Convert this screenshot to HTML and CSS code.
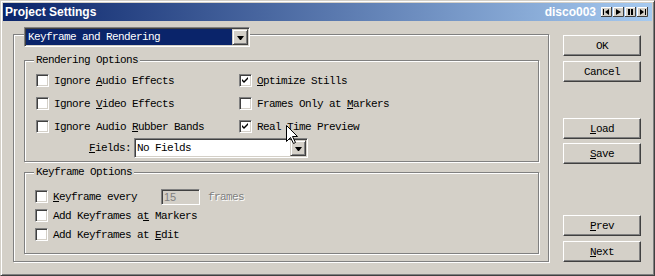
FILE: index.html
```html
<!DOCTYPE html>
<html lang="en">
<head>
    <meta charset="UTF-8">
    <title>Project Settings</title>
    <link rel="stylesheet" href="styles.css">
</head>
<body>
    <div class="window">
        <div class="titlebar">
            <span class="title">Project Settings</span>
            <span class="clip-name">disco003</span>
            <div class="transport">
                <svg class="tbtn" width="11" height="10" viewBox="0 0 11 10">
                    <rect width="11" height="10" fill="#d4d0c8"/>
                    <path d="M0.5 9V0.5H10" stroke="#fff" fill="none"/>
                    <path d="M0 9.5H10.5V0" stroke="#404040" fill="none"/>
                    <rect x="2" y="2" width="1" height="6" fill="#000"/>
                    <polygon points="8,2 8,8 4,5" fill="#000"/>
                </svg>
                <svg class="tbtn" width="11" height="10" viewBox="0 0 11 10">
                    <rect width="11" height="10" fill="#d4d0c8"/>
                    <path d="M0.5 9V0.5H10" stroke="#fff" fill="none"/>
                    <path d="M0 9.5H10.5V0" stroke="#404040" fill="none"/>
                    <polygon points="3,2 3,8 8,5" fill="#000"/>
                </svg>
                <svg class="tbtn" width="11" height="10" viewBox="0 0 11 10">
                    <rect width="11" height="10" fill="#d4d0c8"/>
                    <path d="M0.5 9V0.5H10" stroke="#fff" fill="none"/>
                    <path d="M0 9.5H10.5V0" stroke="#404040" fill="none"/>
                    <rect x="3" y="2" width="2" height="6" fill="#000"/>
                    <rect x="6" y="2" width="2" height="6" fill="#000"/>
                </svg>
                <svg class="tbtn" width="11" height="10" viewBox="0 0 11 10">
                    <rect width="11" height="10" fill="#d4d0c8"/>
                    <path d="M0.5 9V0.5H10" stroke="#fff" fill="none"/>
                    <path d="M0 9.5H10.5V0" stroke="#404040" fill="none"/>
                    <polygon points="3,2 3,8 7,5" fill="#000"/>
                    <rect x="8" y="2" width="1" height="6" fill="#000"/>
                </svg>
            </div>
        </div>

        <div class="content">
            <div class="main-frame">
                <div class="combo combo-section">
                    <span class="combo-value selected">Keyframe and Rendering</span>
                    <span class="combo-arrow"></span>
                </div>

                <div class="group group-render">
                    <div class="group-title">Rendering Options</div>
                    <div class="option-grid">
                        <label class="check"><span class="box"></span><span>Ignore <u>A</u>udio Effects</span></label>
                        <label class="check"><span class="box"><svg class="tick" viewBox="0 0 7 7"><path d="M0 2L2 4L6 0V2L2 6L0 4Z"/></svg></span><span><u>O</u>ptimize Stills</span></label>
                        <label class="check"><span class="box"></span><span>Ignore <u>V</u>ideo Effects</span></label>
                        <label class="check"><span class="box"></span><span>Frames Only at <u>M</u>arkers</span></label>
                        <label class="check"><span class="box"></span><span>Ignore Audio <u>R</u>ubber Bands</span></label>
                        <label class="check"><span class="box"><svg class="tick" viewBox="0 0 7 7"><path d="M0 2L2 4L6 0V2L2 6L0 4Z"/></svg></span><span>Real <u>T</u>ime Preview</span></label>
                    </div>
                    <div class="fields-row">
                        <span class="fields-label"><u>F</u>ields:</span>
                        <div class="combo combo-fields">
                            <span class="combo-value">No Fields</span>
                            <span class="combo-arrow"></span>
                        </div>
                    </div>
                </div>

                <div class="group group-keyframe">
                    <div class="group-title">Keyframe Options</div>
                    <div class="key-rows">
                        <div class="key-row">
                            <label class="check"><span class="box"></span><span class="every-label"><u>K</u>eyframe every</span></label>
                            <span class="num-input">15</span>
                            <span class="disabled-text">frames</span>
                        </div>
                        <label class="check"><span class="box"></span><span>Add Keyframes a<u>t</u> Markers</span></label>
                        <label class="check"><span class="box"></span><span>Add Keyframes at <u>E</u>dit</span></label>
                    </div>
                </div>
            </div>

            <div class="buttons">
                <button class="btn">OK</button>
                <button class="btn btn-cancel">Cancel</button>
                <button class="btn btn-load"><u>L</u>oad</button>
                <button class="btn btn-save"><u>S</u>ave</button>
                <button class="btn btn-prev"><u>P</u>rev</button>
                <button class="btn btn-next"><u>N</u>ext</button>
            </div>
        </div>

        <svg class="cursor" width="12" height="20" viewBox="0 0 12 20">
            <path d="M0.5 0.5V16.5L4.5 12.5L7.5 18.5L9.5 17.5L6.5 11.5H11.5Z" fill="#fff" stroke="#000"/>
        </svg>
    </div>
</body>
</html>
```

FILE: styles.css
```css
:root {
    --face: #d4d0c8;
    --shadow: #808080;
    --dark: #404040;
    --light: #fff;
    --navy: #0a246a;
}

* {
    margin: 0;
    padding: 0;
    box-sizing: border-box;
}

body {
    background: var(--face);
    color: #000;
    font-family: "Liberation Mono", "DejaVu Sans Mono", monospace;
    font-size: 11px;
    letter-spacing: -0.6px;
    overflow: hidden;
}

.window {
    position: relative;
    width: 655px;
    height: 276px;
    padding: 2px;
    border: 1px solid;
    border-color: var(--face) var(--dark) var(--dark) var(--face);
    box-shadow: inset 1px 1px var(--light), inset -1px -1px var(--shadow);
}

/* title bar */
.titlebar {
    display: flex;
    align-items: center;
    height: 18px;
    padding: 0 4px 0 2px;
    background: linear-gradient(to right, var(--navy), #a6caf0);
    color: #fff;
    font-family: "Liberation Sans", Arial, sans-serif;
    font-size: 12px;
    font-weight: bold;
    letter-spacing: 0;
}

.title {
    flex: 1;
}

.clip-name {
    margin-right: 5px;
}

.transport {
    display: flex;
    gap: 1px;
}

.tbtn {
    display: block;
}

/* body */
.content {
    display: flex;
    padding-left: 10px;
}

.main-frame {
    width: 536px;
    height: 228px;
    margin-top: 13px;
    padding: 0 9px 7px 10px;
    border: 1px solid var(--shadow);
    box-shadow: inset 1px 1px var(--light), 1px 1px var(--light);
}

.combo {
    display: flex;
    height: 20px;
    padding: 1px;
    background: #fff;
    border: 1px solid;
    border-color: var(--shadow) var(--light) var(--light) var(--shadow);
    box-shadow: inset 1px 1px var(--dark), inset -1px -1px var(--face);
}

.combo-section {
    width: 226px;
    margin-top: -8px;
}

.combo-value {
    flex: 1;
    line-height: 16px;
    padding-left: 2px;
}

.combo-value.selected {
    background: var(--navy);
    color: #fff;
}

.combo-arrow {
    display: flex;
    align-items: center;
    justify-content: center;
    width: 16px;
    height: 16px;
    background: var(--face);
    border: 1px solid;
    border-color: var(--face) var(--dark) var(--dark) var(--face);
    box-shadow: inset 1px 1px var(--light), inset -1px -1px var(--shadow);
}

.combo-arrow::after {
    content: "";
    width: 1px;
    margin-top: 1px;
    border-top: 4px solid #000;
    border-left: 3px solid transparent;
    border-right: 3px solid transparent;
}

.group {
    border: 1px solid var(--shadow);
    box-shadow: inset 1px 1px var(--light), 1px 1px var(--light);
}

.group-title {
    width: max-content;
    margin: -8px 0 0 -2px;
    padding: 0 2px;
    line-height: 14px;
    background: var(--face);
}

.group-render {
    height: 102px;
    margin-top: 13px;
    padding-left: 11px;
}

.option-grid {
    display: grid;
    grid-template-columns: 203px auto;
    grid-auto-rows: 23px;
    margin-top: 2px;
}

.check {
    display: flex;
    align-items: center;
    gap: 5px;
}

.box {
    position: relative;
    width: 13px;
    height: 13px;
    flex: none;
    background: #fff;
    border: 1px solid;
    border-color: var(--shadow) var(--light) var(--light) var(--shadow);
    box-shadow: inset 1px 1px var(--dark), inset -1px -1px var(--face);
}

.tick {
    display: block;
    width: 7px;
    height: 7px;
    margin: 2px 0 0 2px;
}

.fields-row {
    display: flex;
    align-items: center;
    height: 20px;
}

.fields-label {
    width: 95px;
    text-align: right;
}

.combo-fields {
    width: 174px;
    margin-left: 3px;
}

.combo-fields .combo-value {
    padding-left: 1px;
}

.group-keyframe {
    height: 82px;
    margin-top: 10px;
    padding-left: 10px;
}

.group-keyframe .group-title {
    margin-left: -1px;
}

.key-rows {
    display: grid;
    grid-auto-rows: 19px;
    margin-top: 8px;
}

.key-row {
    display: flex;
    align-items: center;
}

.every-label {
    width: 108px;
}

.num-input {
    width: 39px;
    height: 16px;
    padding-left: 2px;
    background: var(--face);
    color: var(--shadow);
    font-family: "Liberation Sans", Arial, sans-serif;
    font-size: 11px;
    line-height: 14px;
    letter-spacing: 0;
    border: 1px solid;
    border-color: var(--shadow) var(--light) var(--light) var(--shadow);
    box-shadow: inset 1px 1px var(--dark), inset -1px -1px var(--face);
}

.disabled-text {
    margin-left: 8px;
    color: var(--shadow);
    text-shadow: 1px 1px var(--light);
}

/* right column buttons */
.buttons {
    display: flex;
    flex-direction: column;
    margin-left: 14px;
    padding-top: 14px;
}

.btn {
    width: 78px;
    height: 21px;
    background: var(--face);
    color: #000;
    font: inherit;
    letter-spacing: inherit;
    border: 1px solid;
    border-color: var(--light) var(--dark) var(--dark) var(--light);
    box-shadow: inset -1px -1px var(--shadow);
}

.btn-cancel,
.btn-next {
    margin-top: 5px;
}

.btn-save {
    margin-top: 4px;
}

.btn-load {
    margin-top: 36px;
}

.btn-prev {
    margin-top: 51px;
}

.cursor {
    position: absolute;
    left: 285px;
    top: 124px;
}
```
